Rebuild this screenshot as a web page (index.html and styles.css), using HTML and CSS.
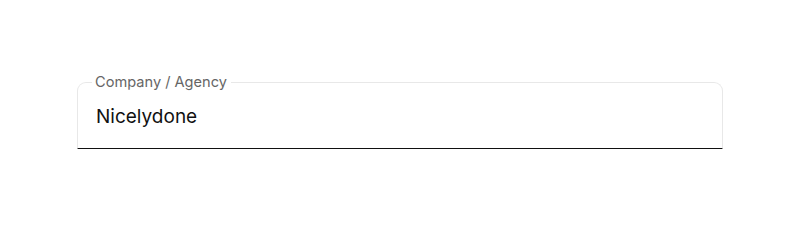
FILE: index.html
```html
<!DOCTYPE html>
<html lang="en">
<head>
    <meta charset="UTF-8">
    <title>Company</title>
    <link rel="stylesheet" href="styles.css">
</head>
<body>

<div class="page">
    <fieldset class="field">
        <legend>Company / Agency</legend>
        <input type="text" class="field-input" value="Nicelydone">
    </fieldset>
</div>

</body>
</html>
```

FILE: styles.css
```css
* {
    margin: 0;
    padding: 0;
    box-sizing: border-box;
    font-family: 'Inter', sans-serif;
}

body {
    background: #fff;
    width: 800px;
    height: 225px;
}

.page {
    padding: 74px 77px 0 77px;
}

.field {
    width: 646px;
    height: 75px;
    border: 1px solid #e8e8e8;
    border-bottom: 1.5px solid #111;
    border-radius: 9px 9px 0 0;
    padding: 0 18px 0 14px;
}

.field legend {
    padding: 0 4px 0 3px;
    font-size: 14.6px;
    color: #666;
    line-height: 16px;
}

.field-input {
    display: block;
    width: 100%;
    border: none;
    outline: none;
    background: transparent;
    font-size: 19px;
    color: #111;
    padding: 16px 0 0 4px;
    line-height: 22px;
}
```
